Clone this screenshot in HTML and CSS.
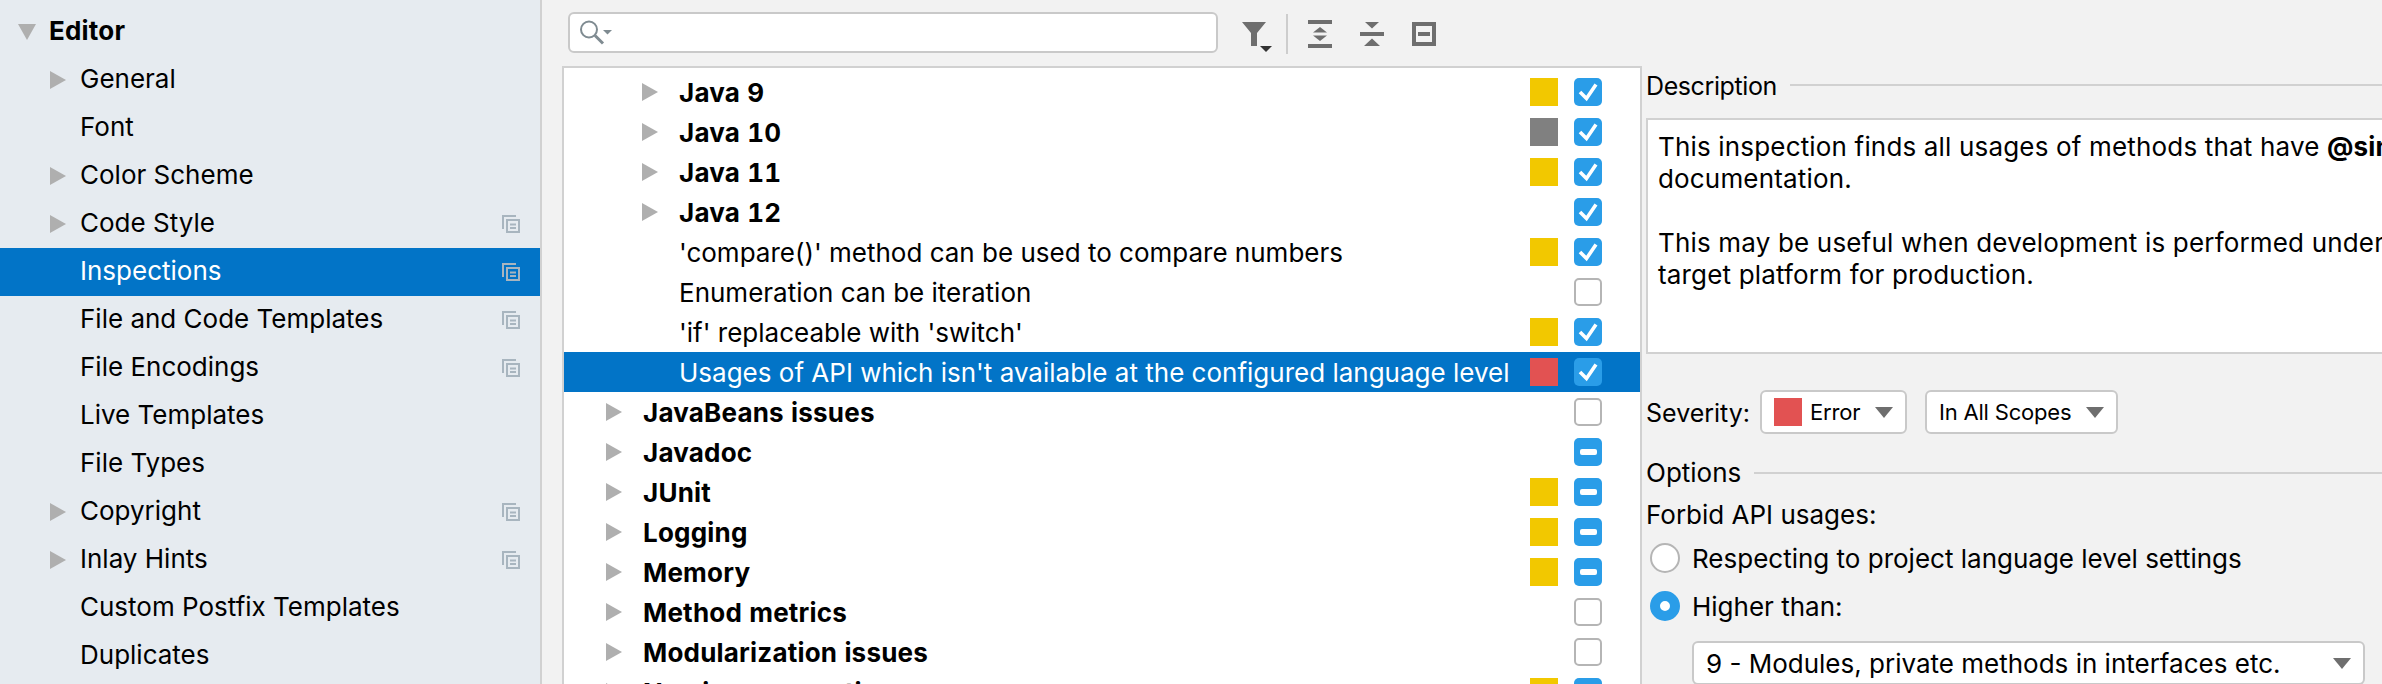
FILE: index.html
```html
<!DOCTYPE html>
<html lang="en">
<head>
<meta charset="utf-8">
<title>Inspections</title>
<link rel="stylesheet" href="styles.css">
</head>
<body>
<svg class="defs" width="0" height="0">
  <symbol id="right" viewBox="0 0 16 18"><path d="M0 0L16 9L0 18Z"/></symbol>
  <symbol id="down" viewBox="0 0 18 16"><path d="M0 0H18L9 16Z"/></symbol>
  <symbol id="drop" viewBox="0 0 18 11"><path d="M0 0H18L9 11Z"/></symbol>
  <symbol id="copy" viewBox="0 0 18 18"><path d="M1 14V1H14M5 5H17V17H5ZM8 9.5H14M8 13H14" fill="none" stroke="currentColor" stroke-width="2"/></symbol>
  <symbol id="check" viewBox="0 0 28 28"><path d="M6 14L12.5 20.5L22 6.5" fill="none" stroke="#fff" stroke-width="3.6"/></symbol>
</svg>
<div class="app">
  <nav class="sidebar">
    <div class="nav-row nav-root"><svg class="arrow-down"><use href="#down"/></svg><span>Editor</span></div>
    <div class="nav-row"><svg class="arrow"><use href="#right"/></svg><span>General</span></div>
    <div class="nav-row nav-leaf"><span>Font</span></div>
    <div class="nav-row"><svg class="arrow"><use href="#right"/></svg><span>Color Scheme</span></div>
    <div class="nav-row"><svg class="arrow"><use href="#right"/></svg><span>Code Style</span><svg class="copy"><use href="#copy"/></svg></div>
    <div class="nav-row nav-leaf selected"><span>Inspections</span><svg class="copy"><use href="#copy"/></svg></div>
    <div class="nav-row nav-leaf"><span>File and Code Templates</span><svg class="copy"><use href="#copy"/></svg></div>
    <div class="nav-row nav-leaf"><span>File Encodings</span><svg class="copy"><use href="#copy"/></svg></div>
    <div class="nav-row nav-leaf"><span>Live Templates</span></div>
    <div class="nav-row nav-leaf"><span>File Types</span></div>
    <div class="nav-row"><svg class="arrow"><use href="#right"/></svg><span>Copyright</span><svg class="copy"><use href="#copy"/></svg></div>
    <div class="nav-row"><svg class="arrow"><use href="#right"/></svg><span>Inlay Hints</span><svg class="copy"><use href="#copy"/></svg></div>
    <div class="nav-row nav-leaf"><span>Custom Postfix Templates</span></div>
    <div class="nav-row nav-leaf"><span>Duplicates</span></div>
  </nav>
  <main class="main">
    <div class="toolbar">
      <div class="search">
        <svg class="search-icon" viewBox="0 0 32 25"><circle cx="9" cy="9.5" r="8" fill="none" stroke="#7f8b91" stroke-width="2"/><path d="M15 15.5L23 23.5" stroke="#7f8b91" stroke-width="3"/><path d="M23 10H32L27.5 14.5Z" fill="#7f8b91"/></svg>
      </div>
      <svg class="tool tool-filter" viewBox="0 0 30 32"><path d="M0 2H24L15 13V26H9V13Z" fill="#6e6e6e"/><path d="M18 26H30L24 32Z" fill="#333"/></svg>
      <div class="tool-sep"></div>
      <svg class="tool tool-expand" viewBox="0 0 24 32"><path d="M0 0H24V4H0ZM0 24H24V28H0ZM12 7L19 12.5H5ZM5 15.5H19L12 21Z" fill="#6e6e6e"/></svg>
      <svg class="tool tool-collapse" viewBox="0 0 24 32"><path d="M5 2H19L12 8.5ZM0 12H24V16H0ZM12 18.5L20 26H4Z" fill="#6e6e6e"/></svg>
      <svg class="tool tool-box" viewBox="0 0 24 32"><path d="M0 2H24V26H0ZM4 6V22H20V6ZM6 12H18V16H6Z" fill="#6e6e6e" fill-rule="evenodd"/></svg>
    </div>
    <div class="content">
      <section class="tree">
        <div class="row lvl2 strong"><svg class="arrow"><use href="#right"/></svg><span>Java 9</span><i class="sev warn"></i><i class="box on"><svg><use href="#check"/></svg></i></div>
        <div class="row lvl2 strong"><svg class="arrow"><use href="#right"/></svg><span>Java 10</span><i class="sev gray"></i><i class="box on"><svg><use href="#check"/></svg></i></div>
        <div class="row lvl2 strong"><svg class="arrow"><use href="#right"/></svg><span>Java 11</span><i class="sev warn"></i><i class="box on"><svg><use href="#check"/></svg></i></div>
        <div class="row lvl2 strong"><svg class="arrow"><use href="#right"/></svg><span>Java 12</span><i class="sev"></i><i class="box on"><svg><use href="#check"/></svg></i></div>
        <div class="row leaf"><span>'compare()' method can be used to compare numbers</span><i class="sev warn"></i><i class="box on"><svg><use href="#check"/></svg></i></div>
        <div class="row leaf"><span>Enumeration can be iteration</span><i class="sev"></i><i class="box off"></i></div>
        <div class="row leaf"><span>'if' replaceable with 'switch'</span><i class="sev warn"></i><i class="box on"><svg><use href="#check"/></svg></i></div>
        <div class="row leaf selected"><span>Usages of API which isn't available at the configured language level</span><i class="sev err"></i><i class="box on"><svg><use href="#check"/></svg></i></div>
        <div class="row lvl1 strong"><svg class="arrow"><use href="#right"/></svg><span>JavaBeans issues</span><i class="sev"></i><i class="box off"></i></div>
        <div class="row lvl1 strong"><svg class="arrow"><use href="#right"/></svg><span>Javadoc</span><i class="sev"></i><i class="box on"><b class="dash"></b></i></div>
        <div class="row lvl1 strong"><svg class="arrow"><use href="#right"/></svg><span>JUnit</span><i class="sev warn"></i><i class="box on"><b class="dash"></b></i></div>
        <div class="row lvl1 strong"><svg class="arrow"><use href="#right"/></svg><span>Logging</span><i class="sev warn"></i><i class="box on"><b class="dash"></b></i></div>
        <div class="row lvl1 strong"><svg class="arrow"><use href="#right"/></svg><span>Memory</span><i class="sev warn"></i><i class="box on"><b class="dash"></b></i></div>
        <div class="row lvl1 strong"><svg class="arrow"><use href="#right"/></svg><span>Method metrics</span><i class="sev"></i><i class="box off"></i></div>
        <div class="row lvl1 strong"><svg class="arrow"><use href="#right"/></svg><span>Modularization issues</span><i class="sev"></i><i class="box off"></i></div>
        <div class="row lvl1 strong"><svg class="arrow"><use href="#right"/></svg><span>Naming conventions</span><i class="sev warn"></i><i class="box on"><b class="dash"></b></i></div>
      </section>
      <section class="details">
        <div class="titled"><span class="title-desc">Description</span><div class="rule"></div></div>
        <div class="desc">
          <p>This inspection finds all usages of methods that have <b>@since</b> tag in their<br>documentation.</p>
          <p>This may be useful when development is performed under<br>target platform for production.</p>
        </div>
        <div class="severity">
          <span class="severity-label">Severity:</span>
          <div class="combo combo-sev"><i class="sev err"></i><span>Error</span><svg class="drop"><use href="#drop"/></svg></div>
          <div class="combo combo-scope"><span>In All Scopes</span><svg class="drop"><use href="#drop"/></svg></div>
        </div>
        <div class="titled titled-options"><span>Options</span><div class="rule"></div></div>
        <div class="forbid">Forbid API usages:</div>
        <div class="radio-row"><i class="radio"></i><span>Respecting to project language level settings</span></div>
        <div class="radio-row"><i class="radio picked"></i><span>Higher than:</span></div>
        <div class="combo combo-level"><span>9 - Modules, private methods in interfaces etc.</span><svg class="drop"><use href="#drop"/></svg></div>
      </section>
    </div>
  </main>
</div>
</body>
</html>
```
FILE: styles.css
```css
* { box-sizing: border-box; }
html, body { margin: 0; height: 684px; overflow: hidden; }
body {
  background: #f2f2f2;
  color: #000;
  font: 400 26px/32px Inter, "Liberation Sans", sans-serif;
}
.defs { position: absolute; }
.app { display: flex; width: 2382px; height: 684px; overflow: hidden; }

.sidebar {
  flex: none;
  width: 542px;
  height: 684px;
  padding-top: 8px;
  background: #e6ebf0;
  border-right: 2px solid #d1d1d1;
}
.nav-row {
  display: flex;
  align-items: center;
  height: 48px;
  padding: 0 20px 0 50px;
}
.nav-row span { padding-bottom: 2px; }
.nav-row .arrow { margin-right: 14px; }
.nav-leaf { padding-left: 80px; }
.nav-root { padding-left: 18px; font-weight: 700; letter-spacing: .2px; }
.arrow-down { flex: none; width: 18px; height: 16px; margin-right: 13px; fill: #afafaf; }
.arrow { flex: none; width: 16px; height: 18px; fill: #afafaf; }
.copy { flex: none; width: 18px; height: 18px; margin-left: auto; color: #a8b5bf; }
.selected { background: #0274c7; color: #fff; }

.main { flex: 1; min-width: 0; display: flex; flex-direction: column; }
.toolbar {
  flex: none;
  display: flex;
  align-items: flex-start;
  height: 66px;
  padding: 12px 0 0 26px;
}
.search {
  width: 650px;
  height: 41px;
  padding: 6px 0 0 10px;
  background: #fff;
  border: 2px solid #c9c9c9;
  border-radius: 6px;
}
.search-icon { display: block; width: 32px; height: 25px; }
.tool { flex: none; height: 32px; margin-top: 8px; }
.tool-filter { width: 30px; margin-left: 24px; }
.tool-sep { flex: none; width: 2px; height: 40px; margin: 2px 20px 0 14px; background: #cdcdcd; }
.tool-expand, .tool-collapse, .tool-box { width: 24px; }
.tool-collapse, .tool-box { margin-left: 28px; }

.content { flex: 1; min-height: 0; display: flex; }
.tree {
  flex: none;
  width: 1080px;
  margin-left: 20px;
  padding-top: 4px;
  background: #fff;
  border: 2px solid #d1d1d1;
  border-bottom: 0;
}
.row {
  display: flex;
  align-items: center;
  height: 40px;
  padding-right: 38px;
}
.row span { padding-top: 2px; }
.row .arrow { margin-right: 21px; }
.lvl1 { padding-left: 42px; }
.lvl2 { padding-left: 78px; }
.leaf { padding-left: 115px; }
.strong { font-weight: 700; letter-spacing: .2px; font-feature-settings: "tnum"; }

.sev { flex: none; width: 28px; height: 28px; }
.row .sev { margin-left: auto; }
.warn { background: #f2c800; }
.gray { background: #808080; }
.err { background: #e25252; }
.box {
  flex: none;
  display: flex;
  align-items: center;
  justify-content: center;
  width: 28px;
  height: 28px;
  margin-left: 16px;
  border-radius: 5px;
}
.box svg { width: 28px; height: 28px; }
.box.on { background: #2a9de8; }
.box.off { background: #fff; border: 2px solid #b5b5b5; }
.dash { width: 17px; height: 6px; background: #fff; border-radius: 2px; }

.details { flex: none; width: 740px; margin-left: 4px; }
.titled { display: flex; align-items: center; height: 38px; }
.titled span { margin-right: 13px; }
.title-desc { padding-top: 2px; font-size: 25px; letter-spacing: -.4px; }
.rule { flex: 1; height: 2px; background: #d1d1d1; }
.desc {
  height: 236px;
  margin-top: 14px;
  padding: 11px 0 0 10px;
  background: #fff;
  border: 2px solid #d1d1d1;
  border-right: 0;
  white-space: nowrap;
  overflow: hidden;
  letter-spacing: .17px;
}
.desc p { margin: 0 0 32px; }
.severity { display: flex; align-items: center; height: 44px; margin-top: 36px; }
.severity-label { width: 114px; padding-top: 2px; font-size: 25px; }
.combo {
  display: flex;
  align-items: center;
  height: 44px;
  padding: 0 12px;
  background: #fff;
  border: 2px solid #c9c9c9;
  border-radius: 6px;
  font-size: 22px;
  letter-spacing: -.2px;
}
.combo-sev { width: 147px; }
.combo-sev .sev { margin-right: 8px; }
.combo-scope { width: 193px; margin-left: 18px; }
.drop { flex: none; width: 18px; height: 11px; margin-left: auto; fill: #6e6e6e; }
.titled-options { margin-top: 20px; }
.forbid { height: 38px; margin-top: 4px; line-height: 38px; }
.radio-row { display: flex; align-items: center; height: 48px; padding-left: 4px; }
.radio-row span { padding-top: 2px; }
.radio {
  flex: none;
  width: 30px;
  height: 30px;
  margin-right: 12px;
  background: #fff;
  border: 2px solid #b5b5b5;
  border-radius: 50%;
}
.radio.picked { background: #fff; border: 10px solid #2a9de8; }
.combo-level { width: 673px; margin: 11px 0 0 46px; font-size: 26px; letter-spacing: 0; }
.combo-level span { padding-top: 2px; }
```
